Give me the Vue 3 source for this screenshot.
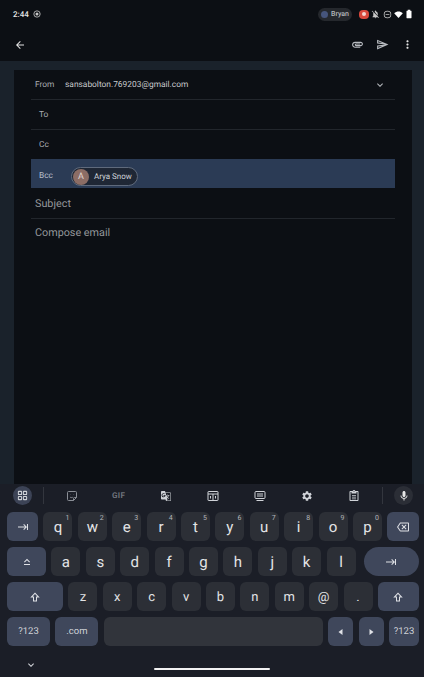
<template>
  <div class="page">
    <div class="status">
      <span class="time">2:44</span>
      <svg class="rec" viewBox="0 0 24 24"><circle cx="12" cy="12" r="9.5" /><circle class="dot" cx="12" cy="12" r="4.5" /></svg>
      <div class="spacer"></div>
      <div class="user">
        <span class="user-dot"></span>
        <span>Bryan</span>
      </div>
      <span class="rec-pill"><span></span></span>
      <svg class="st-icon bell" viewBox="0 0 24 24"><path :d="icons.bellOff" /></svg>
      <svg class="st-icon dnd" viewBox="0 0 24 24"><path :d="icons.dnd" /></svg>
      <svg class="st-icon wifi" viewBox="0 0 24 24"><path :d="icons.wifi" /></svg>
      <svg class="st-icon batt" viewBox="0 0 24 24"><path :d="icons.battery" /></svg>
    </div>

    <div class="appbar">
      <svg class="back" viewBox="0 0 24 24"><path :d="icons.back" /></svg>
      <div class="spacer"></div>
      <svg class="act" viewBox="0 0 24 24"><path :d="icons.attach" /></svg>
      <svg class="act" viewBox="0 0 24 24"><path :d="icons.send" /></svg>
      <svg class="act more" viewBox="0 0 24 24"><path :d="icons.more" /></svg>
    </div>

    <div class="frame">
      <div class="panel">
        <div class="row line">
          <span class="label from">From</span>
          <span class="email">sansabolton.769203@gmail.com</span>
          <svg class="chev" viewBox="0 0 24 24"><path :d="icons.expand" /></svg>
        </div>
        <div class="row line"><span class="label inset">To</span></div>
        <div class="row cc"><span class="label inset">Cc</span></div>
        <div class="row bcc">
          <span class="label inset">Bcc</span>
          <div class="chip">
            <span class="avatar">A</span>
            <span class="chip-name">Arya Snow</span>
          </div>
        </div>
        <div class="row line subject"><span class="big">Subject</span></div>
        <div class="compose"><span class="big">Compose email</span></div>
      </div>
    </div>

    <div class="keyboard">
      <div class="tools">
        <span class="round">
          <svg viewBox="0 0 24 24"><path class="line-icon" :d="icons.grid" /></svg>
        </span>
        <span class="sep"></span>
        <div class="tool-list">
          <span class="slot"><svg class="tool" viewBox="0 0 24 24"><path class="line-icon dim" :d="icons.sticker" /></svg></span>
          <span class="slot gif">GIF</span>
          <span class="slot"><svg class="tool" viewBox="0 0 24 24"><path :d="icons.translate" /></svg></span>
          <span class="slot"><svg class="tool" viewBox="0 0 24 24"><path class="line-icon" :d="icons.numbers" /></svg></span>
          <span class="slot"><svg class="tool" viewBox="0 0 24 24"><path class="line-icon" :d="icons.board" /></svg></span>
          <span class="slot"><svg class="tool" viewBox="0 0 24 24"><path :d="icons.settings" /></svg></span>
          <span class="slot"><svg class="tool" viewBox="0 0 24 24"><path :d="icons.paste" /></svg></span>
        </div>
        <span class="sep"></span>
        <span class="round mic">
          <svg viewBox="0 0 24 24"><path :d="icons.mic" /></svg>
        </span>
      </div>

      <div class="keys">
        <div v-for="(row, i) in rows" :key="i" class="key-row">
          <div v-for="k in row" :key="k.id" class="key" :class="k.cls">
            <svg v-if="k.icon" viewBox="0 0 24 24"><path :d="icons[k.icon]" /></svg>
            <template v-else>{{ k.t }}</template>
            <sup v-if="k.n" class="num">{{ k.n }}</sup>
          </div>
        </div>
      </div>

      <div class="nav">
        <svg class="nav-chev" viewBox="0 0 24 24"><path :d="icons.expand" /></svg>
        <span class="home"></span>
      </div>
    </div>
  </div>
</template>

<script setup>
const icons = {
  back: 'M20 11H7.83l5.59-5.59L12 4l-8 8 8 8 1.41-1.41L7.83 13H20v-2z',
  attach: 'M2 12.5C2 9.46 4.46 7 7.5 7H18c2.21 0 4 1.79 4 4s-1.79 4-4 4H9.5C8.12 15 7 13.88 7 12.5S8.12 10 9.5 10H17v2H9.41c-.55 0-.55 1 0 1H18c1.1 0 2-.9 2-2s-.9-2-2-2H7.5C5.57 9 4 10.57 4 12.5S5.57 16 7.5 16H17v2H7.5C4.46 18 2 15.54 2 12.5z',
  send: 'M4.01 6.03l7.51 3.22-7.52-1 .01-2.22m7.5 8.72L4 17.97v-2.22l7.51-1M2.01 3L2 10l15 2-15 2 .01 7L23 12 2.01 3z',
  more: 'M12 8c1.1 0 2-.9 2-2s-.9-2-2-2-2 .9-2 2 .9 2 2 2zm0 2c-1.1 0-2 .9-2 2s.9 2 2 2 2-.9 2-2-.9-2-2-2zm0 6c-1.1 0-2 .9-2 2s.9 2 2 2 2-.9 2-2-.9-2-2-2z',
  expand: 'M16.59 8.59L12 13.17 7.41 8.59 6 10l6 6 6-6z',
  bellOff: 'M20 18.7 7.3 5.7A6 6 0 0 0 6 9.5V16l-2 2v1h13.7l2 2 1.3-1.3L3.3 2.3 2 3.6M18 15V10c0-3-1.6-5.6-4.5-6.3V3a1.5 1.5 0 0 0-3 0v.7c-.5.1-1 .3-1.4.6zM12 22c1.1 0 2-.9 2-2h-4c0 1.1.9 2 2 2z',
  dnd: 'M12 2a10 10 0 1 0 0 20 10 10 0 0 0 0-20zm0 18a8 8 0 1 1 0-16 8 8 0 0 1 0 16zM7 11h10v2H7z',
  wifi: 'M12 21 .5 8.5C7 2.5 17 2.5 23.5 8.5z',
  battery: 'M9 2h6v2h2a1 1 0 0 1 1 1v16a1 1 0 0 1-1 1H7a1 1 0 0 1-1-1V5a1 1 0 0 1 1-1h2z',
  grid: 'M4 3h5a1 1 0 0 1 1 1v5a1 1 0 0 1-1 1H4a1 1 0 0 1-1-1V4a1 1 0 0 1 1-1zM15 3h5a1 1 0 0 1 1 1v5a1 1 0 0 1-1 1h-5a1 1 0 0 1-1-1V4a1 1 0 0 1 1-1zM4 14h5a1 1 0 0 1 1 1v5a1 1 0 0 1-1 1H4a1 1 0 0 1-1-1v-5a1 1 0 0 1 1-1zM15 14h5a1 1 0 0 1 1 1v5a1 1 0 0 1-1 1h-5a1 1 0 0 1-1-1v-5a1 1 0 0 1 1-1z',
  sticker: 'M5 3h14a2 2 0 0 1 2 2v10l-6 6H5a2 2 0 0 1-2-2V5a2 2 0 0 1 2-2zM21 15h-4a2 2 0 0 0-2 2v4M8 14c1.5 1.5 4 1.5 5.5.5M8.5 9h.5M15 9h.5',
  translate: 'M20 5h-9.12L10 2H4c-1.1 0-2 .9-2 2v13c0 1.1.9 2 2 2h7l1 3h8c1.1 0 2-.9 2-2V7c0-1.1-.9-2-2-2zM7.17 14.59c-2.25 0-4.09-1.83-4.09-4.09s1.83-4.09 4.09-4.09c1.04 0 1.99.37 2.74 1.07l.07.06-1.23 1.18-.06-.05c-.29-.27-.78-.59-1.52-.59-1.31 0-2.38 1.09-2.38 2.42s1.07 2.42 2.38 2.42c1.37 0 1.96-.87 2.12-1.46H7.08V9.91h3.95l.01.07c.04.21.05.4.05.61 0 2.35-1.61 4-3.92 4zm6.03-1.71c.33.6.74 1.18 1.19 1.7l-.54.53-.65-2.23zm.77-.76h-.99l-.31-1.04h3.99s-.34 1.31-1.56 2.74c-.52-.62-.89-1.23-1.13-1.7zM21 20c0 .55-.45 1-1 1h-7l2-2-.81-2.77.92-.92L17.79 18l.73-.73-2.71-2.68c.9-1.03 1.6-2.25 1.92-3.51H19v-1.04h-3.64V9h-1.04v1.04h-1.96L11.18 6H20c.55 0 1 .45 1 1v13z',
  numbers: 'M3 3h18a1 1 0 0 1 1 1v16a1 1 0 0 1-1 1H3a1 1 0 0 1-1-1V4a1 1 0 0 1 1-1zM2 8h20M7 12v5M12 8v13M17 12v5',
  board: 'M4 3h16a2 2 0 0 1 2 2v10a2 2 0 0 1-2 2H4a2 2 0 0 1-2-2V5a2 2 0 0 1 2-2zM6 8h12M6 12h12M5 21h14',
  settings: 'M19.14 12.94c.04-.3.06-.61.06-.94 0-.32-.02-.64-.07-.94l2.03-1.58c.18-.14.23-.41.12-.61l-1.92-3.32c-.12-.22-.37-.29-.59-.22l-2.39.96c-.5-.38-1.03-.7-1.62-.94l-.36-2.54c-.04-.24-.24-.41-.48-.41h-3.84c-.24 0-.43.17-.47.41l-.36 2.54c-.59.24-1.13.57-1.62.94l-2.39-.96c-.22-.08-.47 0-.59.22L2.74 8.87c-.12.21-.08.47.12.61l2.03 1.58c-.05.3-.09.63-.09.94s.02.64.07.94l-2.03 1.58c-.18.14-.23.41-.12.61l1.92 3.32c.12.22.37.29.59.22l2.39-.96c.5.38 1.03.7 1.62.94l.36 2.54c.05.24.24.41.48.41h3.84c.24 0 .44-.17.47-.41l.36-2.54c.59-.24 1.13-.56 1.62-.94l2.39.96c.22.08.47 0 .59-.22l1.92-3.32c.12-.22.07-.47-.12-.61l-2.01-1.58zM12 15.6c-1.98 0-3.6-1.62-3.6-3.6s1.62-3.6 3.6-3.6 3.6 1.62 3.6 3.6-1.62 3.6-3.6 3.6z',
  paste: 'M19 2h-4.18C14.4.84 13.3 0 12 0S9.6.84 9.18 2H5c-1.1 0-2 .9-2 2v16c0 1.1.9 2 2 2h14c1.1 0 2-.9 2-2V4c0-1.1-.9-2-2-2zm-7 0c.55 0 1 .45 1 1s-.45 1-1 1-1-.45-1-1 .45-1 1-1zm7 18H5V4h2v3h10V4h2v16zM8 10h8v1.5H8zM8 13.5h8V15H8zM8 17h8v1.5H8z',
  mic: 'M12 14c1.66 0 3-1.34 3-3V5c0-1.66-1.34-3-3-3S9 3.34 9 5v6c0 1.66 1.34 3 3 3zm5.3-3c0 3-2.54 5.1-5.3 5.1S6.7 14 6.7 11H5c0 3.41 2.72 6.23 6 6.72V21h2v-3.28c3.28-.48 6-3.3 6-6.72h-1.7z',
  tab: 'M2 11h14.2l-3.6-3.6L14 6l6 6-6 6-1.4-1.4 3.6-3.6H2zM20 6h2v12h-2z',
  caps: 'M12 8.4 16.6 13l1.4-1.4-6-6-6 6L7.4 13zM6 18h12v-2H6z',
  backspace: 'M22 3H7c-.69 0-1.23.35-1.59.88L0 12l5.41 8.11c.36.53.9.89 1.59.89h15c1.1 0 2-.9 2-2V5c0-1.1-.9-2-2-2zm0 16H7.07L2.4 12l4.66-7H22v14zm-11.59-2L14 13.41 17.59 17 19 15.59 15.41 12 19 8.41 17.59 7 14 10.59 10.41 7 9 8.41 12.59 12 9 15.59z',
  shift: 'M12 3 2.5 13H8v8h8v-8h5.5zM12 6 16.8 11H14v8h-4v-8H7.2z',
  left: 'M15 6v12l-8-6z',
  right: 'M9 6v12l8-6z'
}

function letters(str, nums = '') {
  return str.split('').map((t, i) => ({ id: t, t, n: nums[i] }))
}

const rows = [
  [
    { id: 'tab', icon: 'tab', cls: 'fn w-31' },
    ...letters('qwertyuiop', '1234567890'),
    { id: 'del', icon: 'backspace', cls: 'fn w-32' }
  ],
  [
    { id: 'caps', icon: 'caps', cls: 'fn w-39' },
    ...letters('asdfghjkl'),
    { id: 'next', icon: 'tab', cls: 'fn w-55 pill' }
  ],
  [
    { id: 'shift', icon: 'shift', cls: 'fn w-56' },
    ...letters('zxcvbnm@.').map(k => ({ ...k, cls: 'low' })),
    { id: 'shift2', icon: 'shift', cls: 'fn w-41' }
  ],
  [
    { id: 'sym', t: '?123', cls: 'fn w-43 small' },
    { id: 'com', t: '.com', cls: 'fn w-43 small' },
    { id: 'space', t: '', cls: 'grow' },
    { id: 'left', icon: 'left', cls: 'fn w-25' },
    { id: 'right', icon: 'right', cls: 'fn w-25' },
    { id: 'sym2', t: '?123', cls: 'fn w-30 small' }
  ]
]
</script>

<style>
html, body { margin: 0; background: #0c0f14; }
</style>

<style scoped>
.page {
  width: 424px;
  height: 677px;
  display: flex;
  flex-direction: column;
  overflow: hidden;
  background: #0c0f14;
  font-family: Roboto, "Liberation Sans", sans-serif;
  color: #c4c7cc;
  text-rendering: geometricPrecision;
}
.spacer { flex: 1; }

.status {
  height: 28px;
  display: flex;
  align-items: center;
  padding: 0 10px 0 13px;
  flex-shrink: 0;
}
.time { font-size: 8px; font-weight: 500; color: #e6e6e6; }
.rec { width: 8px; height: 8px; margin-left: 4px; }
.rec circle { fill: none; stroke: #c8c8c8; stroke-width: 2.5; }
.rec .dot { fill: #c8c8c8; stroke: none; }
.user {
  display: flex;
  align-items: center;
  gap: 3px;
  width: 34px;
  height: 13px;
  box-sizing: border-box;
  padding-left: 3px;
  border-radius: 7px;
  background: #25282d;
  font-size: 7px;
  font-weight: 500;
  color: #b6b9be;
}
.user-dot { width: 7px; height: 7px; border-radius: 50%; background: #46557c; }
.rec-pill {
  width: 10px;
  height: 9px;
  margin-left: 7px;
  border-radius: 4px;
  background: #d9483c;
  display: flex;
  align-items: center;
  justify-content: center;
}
.rec-pill span { width: 4px; height: 4px; border-radius: 50%; background: #f5d5d0; }
.st-icon { width: 9px; height: 9px; fill: #c8c8c8; }
.bell { margin-left: 2px; }
.dnd { margin-left: 3px; }
.wifi { margin-left: 2px; fill: #fff; }
.batt { margin-left: 1px; width: 10px; height: 10px; fill: #fff; }

.appbar {
  height: 33px;
  display: flex;
  align-items: center;
  padding: 0 10px 0 14px;
  box-sizing: border-box;
  flex-shrink: 0;
}
.back { width: 12px; height: 12px; fill: #e4e4e4; }
.act { width: 13px; height: 13px; margin-left: 12px; fill: #b8bbc0; }
.act.more { fill: #e4e4e4; }

.frame {
  flex: 1;
  background: #1a222b;
  padding: 9px 12px 0 14px;
  display: flex;
  min-height: 0;
}
.panel {
  flex: 1;
  background: #0c0f14;
  padding: 0 17px;
}
.row {
  height: 30px;
  box-sizing: border-box;
  display: flex;
  align-items: center;
  font-size: 8.4px;
}
.line { border-bottom: 1px solid #22262c; }
.cc { height: 29px; }
.subject { height: 31px; }
.label { color: #a8abb0; width: 30px; flex-shrink: 0; padding-top: 1px; }
.from { margin-left: 4px; }
.inset { margin-left: 8px; }
.email { color: #c8cacd; padding-top: 1px; }
.chev { width: 12px; height: 12px; margin-left: auto; margin-right: 9px; fill: #b4b7bb; }
.bcc { height: 29px; background: #2b3b55; }
.bcc .label { color: #b4bcc9; padding-top: 4px; }
.chip {
  display: flex;
  align-items: center;
  gap: 5px;
  width: 67px;
  height: 19px;
  box-sizing: border-box;
  margin: 6px 0 0 2px;
  padding-left: 1px;
  border: 1px solid #5f6a7c;
  border-radius: 10px;
  background: #1f2735;
}
.avatar {
  width: 16px;
  height: 16px;
  border-radius: 50%;
  background: #8c6d65;
  color: #e0d6d3;
  font-size: 9px;
  display: flex;
  align-items: center;
  justify-content: center;
}
.chip-name { font-size: 8px; color: #cfd2d7; }
.big { font-size: 10.8px; color: #94979b; margin-left: 4px; }
.compose { padding-top: 5px; line-height: 13px; }

.keyboard {
  height: 193px;
  flex-shrink: 0;
  background: #1b1e27;
  display: flex;
  flex-direction: column;
}
.tools {
  height: 28px;
  flex-shrink: 0;
  display: flex;
  align-items: center;
  padding: 0 11px 5px 13px;
  box-sizing: border-box;
}
.round {
  width: 19px;
  height: 19px;
  flex-shrink: 0;
  border-radius: 50%;
  background: #3c4356;
  display: flex;
  align-items: center;
  justify-content: center;
}
.round svg { width: 11px; height: 11px; fill: #d5d8de; }
.round .line-icon { stroke-width: 2.2; }
.round.mic { background: #2b2e36; margin-left: 11px; }
.round.mic svg { width: 12px; height: 12px; fill: #e6e6e6; }
.sep { width: 1px; height: 17px; background: #33363e; }
.round + .sep { margin-left: 11px; }
.tool-list {
  width: 330px;
  margin: 0 4px;
  display: flex;
  align-items: center;
}
.slot { flex: 1; display: flex; justify-content: center; align-items: center; }
.tool { width: 12px; height: 12px; fill: #d0d3d8; }
.line-icon { fill: none; stroke: #d0d3d8; stroke-width: 2; }
.line-icon.dim { stroke: #8a8e96; }
.gif { font-size: 8px; font-weight: 700; color: #6f737b; letter-spacing: .4px; }

.keys {
  display: flex;
  flex-direction: column;
  gap: 6px;
  padding: 0 5px 0 7px;
}
.key-row { display: flex; gap: 5.4px; }
.key {
  position: relative;
  flex: 0 0 29px;
  height: 29px;
  box-sizing: border-box;
  padding-top: 1px;
  border-radius: 6px;
  background: #2c2f36;
  color: #e3e4e6;
  font-size: 15px;
  display: flex;
  align-items: center;
  justify-content: center;
}
.key svg { width: 12px; height: 12px; fill: #dfe1e6; }
.fn { background: #3f475b; }
.low { font-size: 13px; }
.small { font-size: 9.5px; color: #d0d3d8; padding-top: 0; }
.pill { border-radius: 15px; margin-left: 3px; }
.w-25 { flex-basis: 25px; }
.w-30 { flex-basis: 30px; }
.w-31 { flex-basis: 31px; }
.w-32 { flex-basis: 32px; }
.w-39 { flex-basis: 39px; }
.w-41 { flex-basis: 41px; }
.w-43 { flex-basis: 43px; }
.w-55 { flex-basis: 55px; }
.w-56 { flex-basis: 56px; }
.grow { flex: 1; background: #31343b; }
.num {
  position: absolute;
  top: 2px;
  right: 3px;
  font-size: 7px;
  line-height: 8px;
  color: #b4b7bc;
}

.nav {
  flex: 1;
  position: relative;
  display: flex;
  justify-content: center;
  align-items: flex-end;
  padding-bottom: 7px;
}
.nav-chev {
  position: absolute;
  left: 25px;
  bottom: 6px;
  width: 12px;
  height: 12px;
  fill: #d0d3d8;
}
.home { width: 116px; height: 2px; background: #f2f2f2; border-radius: 1px; margin-right: 1px; }
</style>
